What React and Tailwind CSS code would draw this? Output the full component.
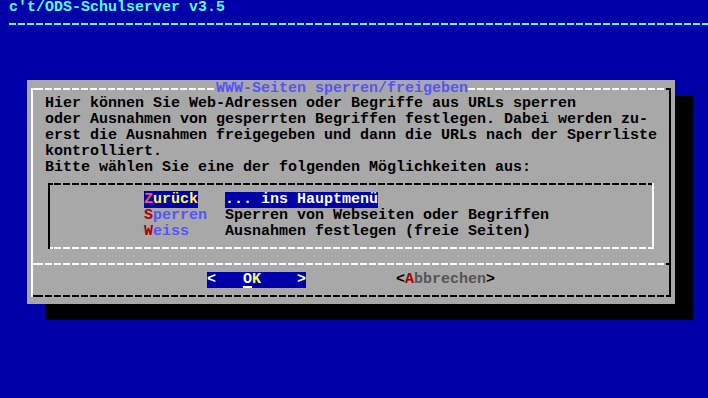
import React from 'react';

// dialog(1) style screen, 9x16 character cells
const WHITE_DASH = 'h-[2px] bg-[repeating-linear-gradient(90deg,#fcfcfc_0_7px,transparent_7px_9px)]';
const BLACK_DASH = 'h-[2px] bg-[repeating-linear-gradient(90deg,#000_0_7px,transparent_7px_9px)]';
const CYAN_DASH = 'h-[2px] bg-[repeating-linear-gradient(90deg,#54fcfc_0_7px,transparent_7px_9px)]';

const bodyLines = [
  'Hier können Sie Web-Adressen oder Begriffe aus URLs sperren',
  'oder Ausnahmen von gesperrten Begriffen festlegen. Dabei werden zu-',
  'erst die Ausnahmen freigegeben und dann die URLs nach der Sperrliste',
  'kontrolliert.',
  'Bitte wählen Sie eine der folgenden Möglichkeiten aus:',
];

const MenuRow = ({ hot, rest, desc, selected }) => (
  <div className="flex h-[16px]">
    <div className="w-[81px]">
      <span className={selected ? 'bg-[#0000a8]' : ''}>
        <span className={selected ? 'text-[#fc5454]' : 'text-[#a80000]'}>{hot}</span>
        <span className={selected ? 'text-[#fcfc54]' : 'text-[#5454fc]'}>{rest}</span>
      </span>
    </div>
    <span className={selected ? 'bg-[#0000a8] text-[#fcfcfc]' : 'text-black'}>{desc}</span>
  </div>
);

export default function App() {
  return (
    <div className="w-[708px] h-[398px] overflow-hidden bg-[#0000a8] font-['Liberation_Mono','DejaVu_Sans_Mono',monospace] font-bold text-[15px] leading-[16px] whitespace-pre">
      {/* backtitle */}
      <div className="h-[16px] pl-[9px] text-[#54fcfc]">c't/ODS-Schulserver v3.5</div>
      <div className="h-[16px] pl-[9px] flex items-center">
        <div className={`${CYAN_DASH} flex-1`} />
      </div>

      {/* dialog box */}
      <div className="mt-[48px] ml-[27px] w-[648px] h-[224px] bg-[#a8a8a8] shadow-[18px_16px_0_0_#000] pt-[8px] pl-[4px]">
        <div className="w-[640px] h-[209px] border-l-2 border-l-[#fcfcfc] border-r-2 border-r-black flex flex-col">
          {/* top border with title */}
          <div className="h-[2px] flex items-center">
            <div className={`${WHITE_DASH} w-[183px] bg-position-[3px_0]`} />
            <span className="w-[252px] h-[16px] text-[#5454fc]">WWW-Seiten sperren/freigeben</span>
            <div className={`${WHITE_DASH} w-[198px]`} />
            <div className="h-[2px] w-[3px] bg-black" />
          </div>

          <div className="mt-[6px] pl-[12px] text-black">
            {bodyLines.map((l) => (
              <div key={l} className="h-[16px]">{l}</div>
            ))}
          </div>

          {/* menu list */}
          <div className="mt-[7px] ml-[15px] w-[606px] h-[66px] border-l-2 border-l-black border-r-2 border-r-[#fcfcfc] flex flex-col">
            <div className={`${BLACK_DASH} bg-position-[4px_0]`} />
            <div className="mt-[7px] pl-[94px] h-[48px]">
              <MenuRow hot="Z" rest="urück" desc="... ins Hauptmenü" selected />
              <MenuRow hot="S" rest="perren" desc="Sperren von Webseiten oder Begriffen" />
              <MenuRow hot="W" rest="eiss" desc="Ausnahmen festlegen (freie Seiten)" />
            </div>
            <div className={`${WHITE_DASH} mt-[7px] bg-position-[4px_0]`} />
          </div>

          {/* separator */}
          <div className="mt-[14px] flex">
            <div className={`${WHITE_DASH} flex-1 bg-position-[3px_0]`} />
            <div className="h-[2px] w-[3px] bg-black" />
          </div>

          {/* buttons */}
          <div className="mt-[7px] h-[16px] flex">
            <div className="ml-[174px] w-[99px] bg-[#0000a8] text-[#fcfcfc]">
              {'<   '}
              <span className="underline decoration-2 underline-offset-[3px]">O</span>
              <span className="text-[#fcfc54]">K</span>
              {'    >'}
            </div>
            <div className="ml-[90px] text-black">
              {'<'}
              <span className="text-[#a80000]">A</span>
              <span className="text-[#545454]">bbrechen</span>
              {'>'}
            </div>
          </div>

          <div className={`${BLACK_DASH} mt-[7px] bg-position-[3px_0]`} />
        </div>
      </div>
    </div>
  );
}
